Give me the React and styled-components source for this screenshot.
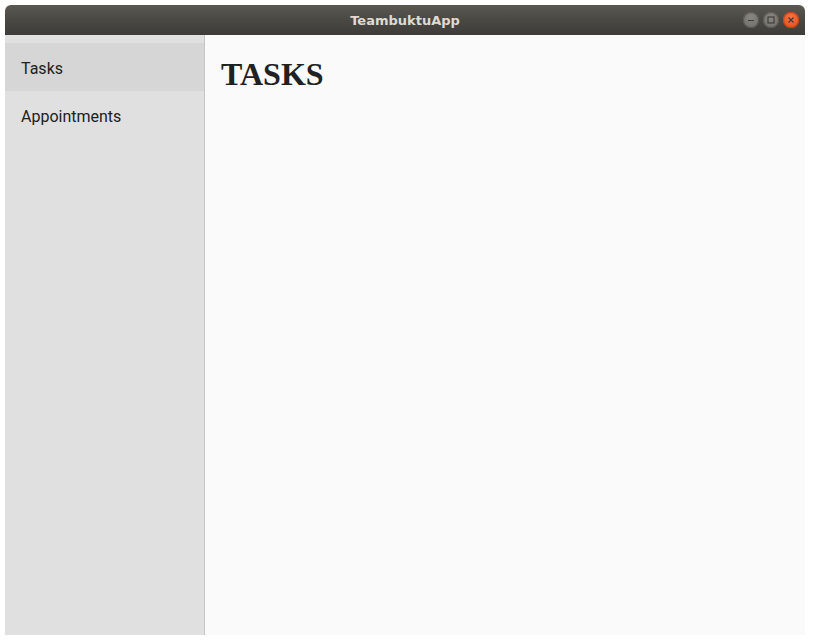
import React, { useState } from "react";
import styled, { createGlobalStyle } from "styled-components";

const GlobalStyle = createGlobalStyle`
  html, body {
    margin: 0;
    padding: 0;
    background: #ffffff;
  }
  body {
    font-family: Roboto, "Noto Sans", sans-serif;
  }
`;

const Desktop = styled.div`
  width: 814px;
  height: 644px;
  padding: 5px 9px 9px 5px;
  box-sizing: border-box;
`;

const Window = styled.div`
  width: 800px;
  height: 630px;
  display: flex;
  flex-direction: column;
  border-radius: 6px 6px 0 0;
  overflow: hidden;
`;

const TitleBar = styled.div`
  height: 30px;
  flex-shrink: 0;
  position: relative;
  display: flex;
  align-items: center;
  justify-content: center;
  background: linear-gradient(to bottom, #5b5852 0%, #4a4843 50%, #3d3c38 100%);
`;

const Title = styled.span`
  font-family: "DejaVu Sans", sans-serif;
  font-weight: bold;
  font-size: 13px;
  color: #dfdbd2;
`;

const Controls = styled.div`
  position: absolute;
  right: 6px;
  top: 7px;
  display: flex;
  gap: 4px;
`;

const CircleButton = styled.div`
  width: 16px;
  height: 16px;
  border-radius: 50%;
  background: ${(p) =>
    p.$close
      ? "radial-gradient(circle at 50% 35%, #f47645 0%, #e95420 70%, #d8481a 100%)"
      : "radial-gradient(circle at 50% 35%, #8a8781 0%, #75736e 70%, #67655f 100%)"};
  box-shadow: inset 0 0 0 1px ${(p) => (p.$close ? "#c24418" : "#5a5853")};
  display: flex;
  align-items: center;
  justify-content: center;
`;

const Body = styled.div`
  flex: 1;
  display: flex;
  min-height: 0;
`;

const Sidebar = styled.nav`
  width: 199px;
  flex-shrink: 0;
  background: #e0e0e0;
  border-right: 1px solid #c6c6c6;
  padding-top: 8px;
  display: flex;
  flex-direction: column;
`;

const NavItem = styled.div`
  height: 48px;
  box-sizing: border-box;
  display: flex;
  align-items: center;
  padding: 2px 16px 0;
  font-family: Roboto, "Noto Sans", sans-serif;
  font-size: 16px;
  color: #212121;
  background: ${(p) => (p.$active ? "#d6d6d6" : "transparent")};
  cursor: pointer;
`;

const Content = styled.main`
  flex: 1;
  background: #fafafa;
  padding: 0 16px;
`;

const Heading = styled.h1`
  font-family: "Liberation Serif", "Times New Roman", serif;
  font-weight: bold;
  font-size: 32px;
  color: #212121;
  margin: 21px 0;
`;

export default function App() {
  const [active, setActive] = useState("Tasks");
  const items = ["Tasks", "Appointments"];

  return (
    <>
      <GlobalStyle />
      <Desktop>
        <Window>
          <TitleBar>
            <Title>TeambuktuApp</Title>
            <Controls>
              <CircleButton>
                <svg width="8" height="8" viewBox="0 0 8 8">
                  <path d="M1 4.5h6" stroke="#3c3b37" strokeWidth="1.2" />
                </svg>
              </CircleButton>
              <CircleButton>
                <svg width="8" height="8" viewBox="0 0 8 8">
                  <rect x="1" y="1" width="6" height="6" fill="none" stroke="#3c3b37" strokeWidth="1.1" />
                </svg>
              </CircleButton>
              <CircleButton $close>
                <svg width="8" height="8" viewBox="0 0 8 8">
                  <path d="M1.5 1.5l5 5M6.5 1.5l-5 5" stroke="#3c3b37" strokeWidth="1.2" />
                </svg>
              </CircleButton>
            </Controls>
          </TitleBar>
          <Body>
            <Sidebar>
              {items.map((it) => (
                <NavItem key={it} $active={active === it} onClick={() => setActive(it)}>
                  {it}
                </NavItem>
              ))}
            </Sidebar>
            <Content>
              <Heading>{active.toUpperCase()}</Heading>
            </Content>
          </Body>
        </Window>
      </Desktop>
    </>
  );
}
